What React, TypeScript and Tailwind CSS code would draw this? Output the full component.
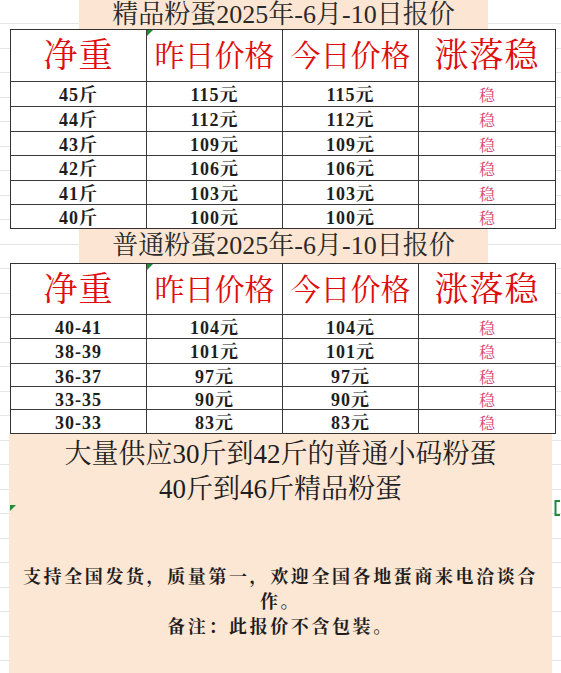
import React from "react";

const serif = "font-['Liberation_Serif','Noto_Serif_CJK_SC','Noto_Sans_CJK_SC',serif]";

type Row = { w: string; y: string; t: string; h: string };

const rows1: Row[] = [
  { w: "45斤", y: "115元", t: "115元", h: "h-[25px]" },
  { w: "44斤", y: "112元", t: "112元", h: "h-[25px]" },
  { w: "43斤", y: "109元", t: "109元", h: "h-[24px]" },
  { w: "42斤", y: "106元", t: "106元", h: "h-[25px]" },
  { w: "41斤", y: "103元", t: "103元", h: "h-[24px]" },
  { w: "40斤", y: "100元", t: "100元", h: "h-[24px]" },
];

const rows2: Row[] = [
  { w: "40-41", y: "104元", t: "104元", h: "h-[24px]" },
  { w: "38-39", y: "101元", t: "101元", h: "h-[25px]" },
  { w: "36-37", y: "97元", t: "97元", h: "h-[23px]" },
  { w: "33-35", y: "90元", t: "90元", h: "h-[23px]" },
  { w: "30-33", y: "83元", t: "83元", h: "h-[24px]" },
];

function Marker() {
  return (
    <svg className="absolute left-0 top-0" width="6" height="6" viewBox="0 0 6 6">
      <polygon points="0,0 6,0 0,6" fill="#1f8a3a" />
    </svg>
  );
}

function Table({ rows, headerH }: { rows: Row[]; headerH: string }) {
  const cell = "flex items-center justify-center border-[#3a3a3a]";
  return (
    <div className="ml-[10px] w-[546px] border-[1.5px] border-[#333] bg-white">
      <div className={`grid grid-cols-4 ${headerH}`}>
        <div className={`${cell} border-r text-[34px] text-[#e00d0d] tracking-[1px]`}>净重</div>
        <div className={`${cell} border-r text-[30px] text-[#e00d0d] relative`}>
          <Marker />
          昨日价格
        </div>
        <div className={`${cell} border-r text-[30px] text-[#e00d0d]`}>今日价格</div>
        <div className={`${cell} text-[34px] text-[#e00d0d] tracking-[1px]`}>涨落稳</div>
      </div>
      {rows.map((r, i) => (
        <div key={i} className={`grid grid-cols-4 border-t border-[#3a3a3a] ${r.h}`}>
          <div className={`${cell} border-r text-[18px] font-bold text-[#1e1e1e] tracking-[1px]`}>{r.w}</div>
          <div className={`${cell} border-r text-[18px] font-bold text-[#1e1e1e] tracking-[1px]`}>{r.y}</div>
          <div className={`${cell} border-r text-[18px] font-bold text-[#1e1e1e] tracking-[1px]`}>{r.t}</div>
          <div className={`${cell} text-[16px] text-[#d9466e]`}>稳</div>
        </div>
      ))}
    </div>
  );
}

function Title({ text, h }: { text: string; h: string }) {
  return (
    <div className={`${h} flex`}>
      <div className="ml-[79px] w-[409px] bg-[#fce5d3] flex items-center justify-center text-[26px] text-[#2a2a2a] leading-none">
        {text}
      </div>
    </div>
  );
}

export default function App() {
  return (
    <div
      className={`${serif} relative w-[561px] h-[673px] overflow-hidden bg-white bg-[image:repeating-linear-gradient(to_bottom,transparent_0px,transparent_23.5px,#e4e4e4_23.5px,#e4e4e4_24.5px)]`}
    >
      <Title text="精品粉蛋2025年-6月-10日报价" h="h-[29px]" />
      <Table rows={rows1} headerH="h-[51px]" />
      <Title text="普通粉蛋2025年-6月-10日报价" h="h-[34px]" />
      <Table rows={rows2} headerH="h-[50px]" />
      <div className="ml-[9px] w-[543px] h-[241px] bg-[#fce6d4] relative pt-[3px] flex flex-col items-center">
        <div className="text-[27px] leading-[35px] text-[#1e1e1e]">大量供应30斤到42斤的普通小码粉蛋</div>
        <div className="text-[27px] leading-[35px] text-[#1e1e1e]">40斤到46斤精品粉蛋</div>
        <div className="mt-[58px] flex flex-col items-center text-[18px] font-bold leading-[25px] text-[#1e1e1e]">
          <div className="tracking-[2.6px]">支持全国发货，质量第一，欢迎全国各地蛋商来电洽谈合</div>
          <div className="tracking-[2.6px]">作。</div>
          <div className="tracking-[2.6px]">备注：此报价不含包装。</div>
        </div>
        <svg className="absolute left-[1px] top-[71px]" width="6" height="6" viewBox="0 0 6 6">
          <polygon points="0,0 6,0 0,6" fill="#1f8a3a" />
        </svg>
      </div>
      <svg className="absolute left-[554px] top-[500px]" width="7" height="16" viewBox="0 0 7 16">
        <path d="M6 1H1.5V15H6" stroke="#1f8a3a" strokeWidth="2" fill="none" />
      </svg>
    </div>
  );
}
